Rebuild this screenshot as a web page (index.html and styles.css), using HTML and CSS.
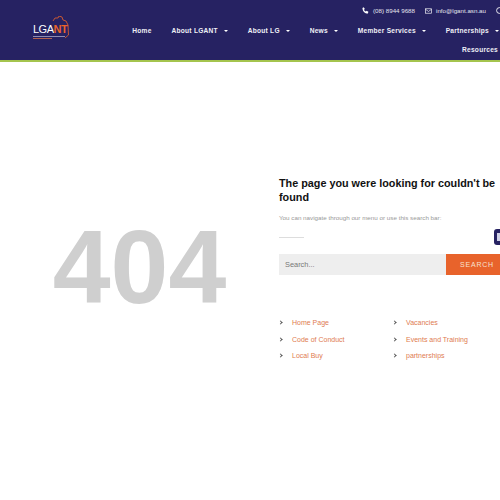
FILE: index.html
```html
<!DOCTYPE html>
<html lang="en">
<head>
    <meta charset="UTF-8">
    <meta name="viewport" content="width=device-width, initial-scale=1.0">
    <title>Page not found - LGANT</title>
    <link rel="stylesheet" href="styles.css">
</head>
<body>
    <header class="site-header">
        <a class="logo" href="#">
            <svg class="logo-map" viewBox="0 0 20 26" width="20" height="26">
                <path d="M4 5L6 2L9 2L10 0L13 1L14 4L17 5L19 9L19.500 19L16 22" fill="none" stroke="#e8632b" stroke-width="0.800"/>
            </svg>
            <span class="logo-name">LGA<span class="logo-nt">NT</span></span>
            <span class="logo-line"></span>
            <span class="logo-line logo-line-short"></span>
        </a>
        <div class="header-right">
            <div class="top-bar">
                <span class="top-item">
                    <svg viewBox="0 0 16 16" width="7" height="7"><path d="M1 2l3-1.500 2.500 4-2 1.500c.8 2 2.500 3.700 4.500 4.500l1.500-2 4 2.500L13.500 15C6.500 15 1 9 1 2z" fill="#fff"/></svg>
                    (08) 8944 9688
                </span>
                <span class="top-item">
                    <svg viewBox="0 0 16 12" width="7" height="6"><rect x="1" y="1" width="14" height="10" fill="none" stroke="#fff" stroke-width="1.500"/><path d="M1 2l7 5 7-5" fill="none" stroke="#fff" stroke-width="1.500"/></svg>
                    info@lgant.asn.au
                </span>
                <span class="top-item">
                    <svg viewBox="0 0 12 12" width="7" height="7"><circle cx="6" cy="6" r="5" fill="none" stroke="#fff" stroke-width="1.500"/></svg>
                </span>
            </div>
            <nav class="main-nav">
                <a href="#">Home</a>
                <a href="#" class="has-sub">About LGANT</a>
                <a href="#" class="has-sub">About LG</a>
                <a href="#" class="has-sub">News</a>
                <a href="#" class="has-sub">Member Services</a>
                <a href="#" class="has-sub">Partnerships</a>
                <a href="#" class="nav-last">Resources</a>
            </nav>
        </div>
    </header>

    <main class="error-page">
        <div class="error-code">404</div>
        <div class="error-info">
            <h1>The page you were looking for couldn't be found</h1>
            <p class="hint">You can navigate through our menu or use this search bar:</p>
            <div class="divider"></div>
            <form class="search-form">
                <input type="text" placeholder="Search...">
                <button type="button">SEARCH</button>
            </form>
            <div class="quick-links">
                <a href="#">Home Page</a>
                <a href="#">Vacancies</a>
                <a href="#">Code of Conduct</a>
                <a href="#">Events and Training</a>
                <a href="#">Local Buy</a>
                <a href="#">partnerships</a>
            </div>
        </div>
    </main>

    <div class="side-tab"></div>
</body>
</html>
```

FILE: styles.css
```css
html, body { height: 100%; }
body { font-family: "Liberation Sans", Arial, sans-serif; margin: 0; background: #fff; overflow: hidden; width: 500px; height: 500px; position: relative; }

.site-header { display: flex; height: 60px; background: #262262; border-bottom: 2px solid #a4c44e; }
.logo { display: block; position: relative; width: 36px; margin: 16px 0 0 33px; text-decoration: none; flex: none; }
.logo-map { position: absolute; left: 16px; top: 0; }
.logo-name { display: block; padding-top: 8px; font-size: 11px; line-height: 11px; color: #fff; letter-spacing: -0.500px; white-space: nowrap; }
.logo-nt { color: #e8632b; font-weight: bold; }
.logo-line { display: block; width: 32px; height: 1px; margin-top: 1px; background: #8f8cb0; }
.logo-line-short { width: 19px; background: #b0604e; }

.header-right { flex: 1; display: flex; flex-direction: column; min-width: 0; }
.top-bar { display: flex; justify-content: flex-end; gap: 10px; height: 21px; align-items: center; color: #e4e4ee; font-size: 6.200px; margin-right: -3px; }
.top-item { display: flex; align-items: center; gap: 4px; }
.main-nav { display: flex; flex-wrap: wrap; justify-content: flex-end; padding-right: 1px; }
.main-nav a { color: #f0f0f6; font-size: 6.600px; font-weight: bold; letter-spacing: 0.250px; text-decoration: none; line-height: 19px; padding: 0 0 0 19.900px; }
.main-nav .has-sub::after { content: ""; display: inline-block; width: 0; height: 0; margin-left: 6px; vertical-align: 1px; border-left: 2.500px solid transparent; border-right: 2.500px solid transparent; border-top: 2.500px solid #fff; }
.main-nav .nav-last { margin-right: 1px; }

.error-page { display: flex; padding-top: 114px; }
.error-code { width: 279px; flex: none; padding-top: 41px; text-align: center; box-sizing: border-box; font-size: 104px; font-weight: bold; line-height: 100px; color: #cfcfcf; }
.error-info { width: 240px; flex: none; }
.error-info h1 { margin: 0; font-size: 10.800px; line-height: 14px; color: #111; }
.hint { margin: 10px 0 0; font-size: 6.250px; color: #999; }
.divider { width: 25px; height: 1px; margin: 16px 0 0; background: #ddd; }
.search-form { display: flex; margin-top: 16px; height: 21px; }
.search-form input { flex: 1; min-width: 0; border: none; background: #eee; padding: 0 6px; font-family: inherit; font-size: 7.400px; }
.search-form input::placeholder { color: #777; }
.search-form button { width: 73px; border: none; background: #e8632b; color: #f7e0d0; font-family: inherit; font-size: 7px; letter-spacing: 0.800px; text-align: left; padding-left: 14px; }

.quick-links { display: grid; grid-template-columns: 114px 1fr; row-gap: 0; margin-top: 40px; }
.quick-links a { position: relative; padding-left: 13px; font-size: 7px; line-height: 16.500px; color: #e07b50; text-decoration: none; }
.quick-links a::before { content: ""; position: absolute; left: 0; top: 6px; width: 2px; height: 2px; border-top: 1px solid #555; border-right: 1px solid #555; transform: rotate(45deg); }

.side-tab { position: absolute; left: 494px; top: 229px; width: 10px; height: 16px; background: #262262; border-radius: 3px; }
.side-tab::before { content: ""; position: absolute; left: 3px; top: 4px; width: 6px; height: 8px; background: #cfd0e6; }
```
